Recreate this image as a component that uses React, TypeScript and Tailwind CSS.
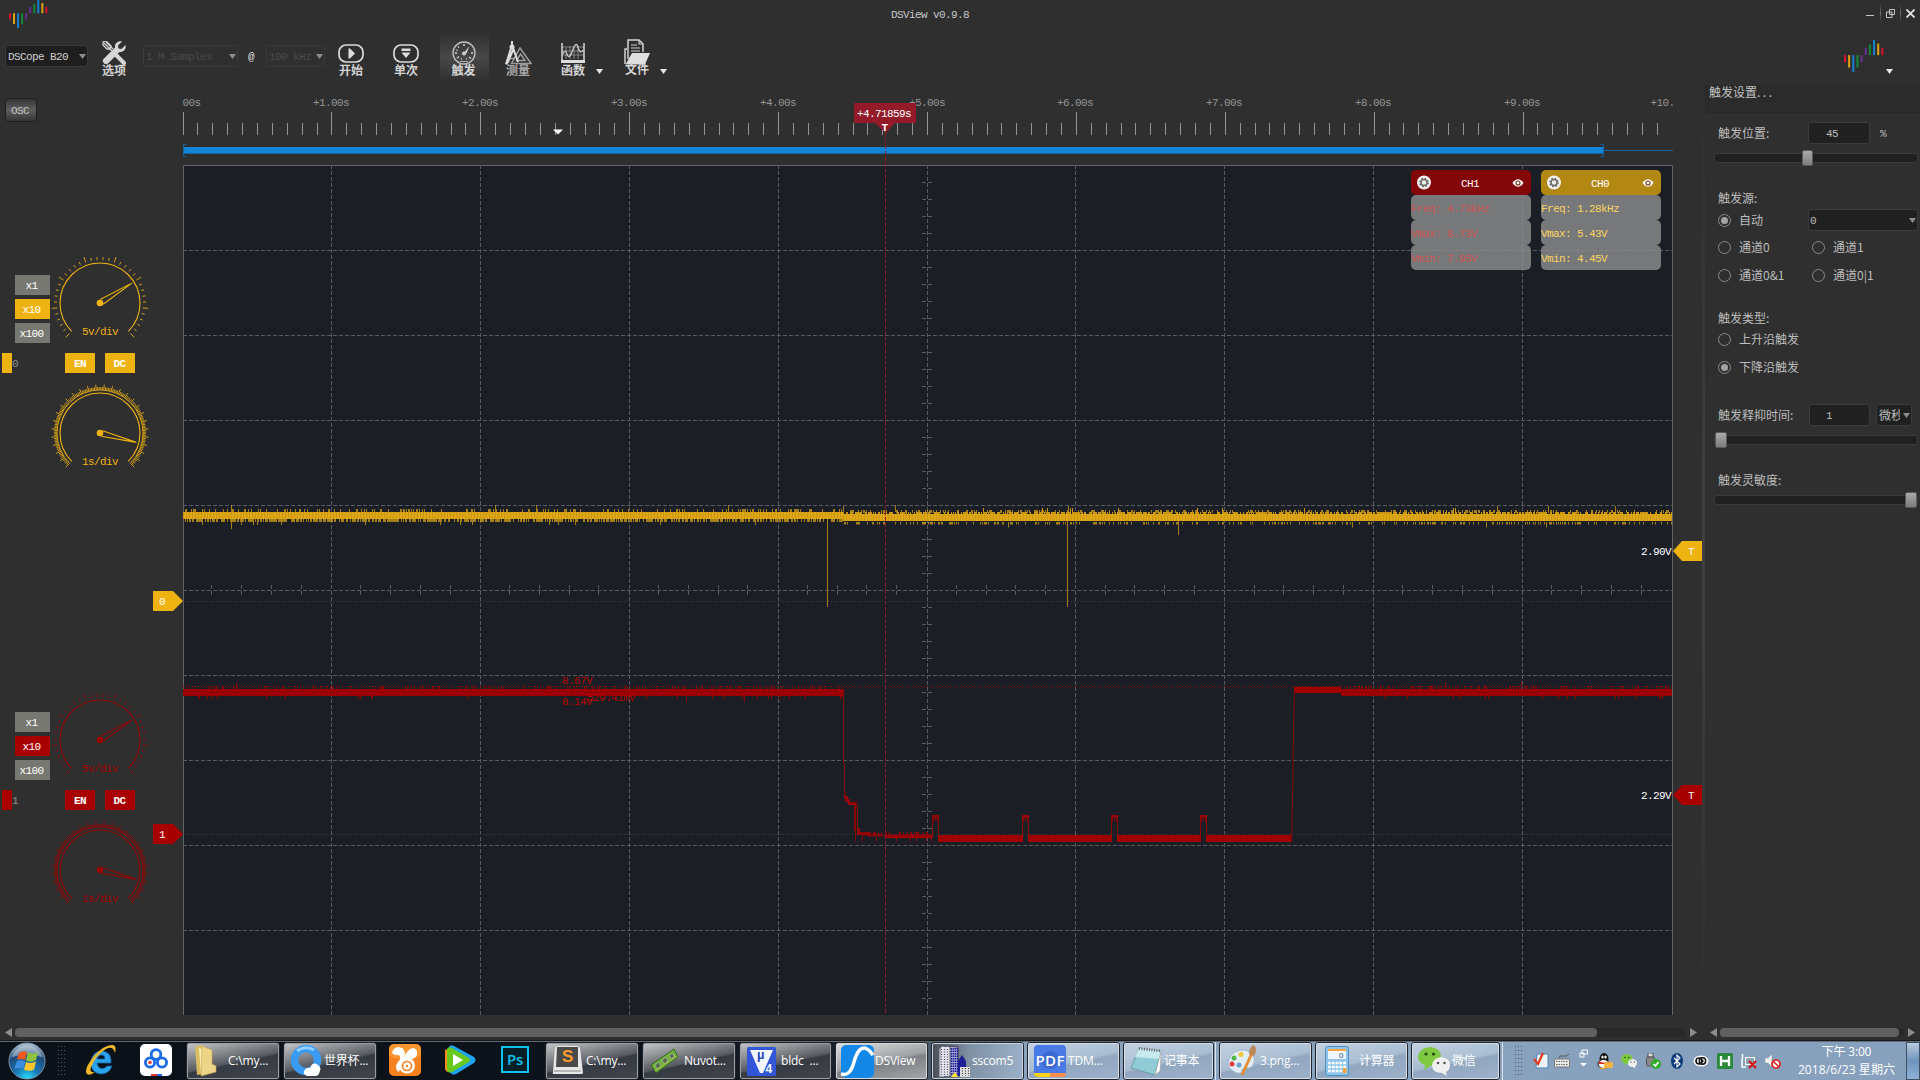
import React from "react";

const MONO = "font-['Liberation_Mono','Noto_Sans_CJK_SC',monospace] text-[11px] leading-[12px] tracking-[-0.6px] whitespace-pre pt-[2px]";
const CJK = "font-['Noto_Sans_CJK_SC',sans-serif] text-[12px] leading-[12px] whitespace-nowrap";

const YELLOW = "#efb311";
const RED = "#a80000";

function rng(seed: number) {
  let s = seed;
  return () => {
    s = (s * 1664525 + 1013904223) % 4294967296;
    return s / 4294967296;
  };
}

/* ---------- logo ---------- */
const LOGO_BARS: [number, number, string][] = [
  [17, 25, "#d8102c"], [17, 31, "#e0a412"], [17, 36, "#1581cf"], [17, 31, "#138a36"], [17, 25, "#693093"],
  [9, 17, "#693093"], [5, 17, "#138a36"], [0, 17, "#1581cf"], [4, 17, "#e0a412"], [9, 17, "#d8102c"],
];
function Logo({ w, h }: { w: number; h: number }) {
  return (
    <svg width={w} height={h} viewBox="0 0 40 36" preserveAspectRatio="none">
      {LOGO_BARS.map(([a, b, c], i) => (
        <rect key={i} x={i * 4.15} y={a} width="2" height={b - a} fill={c} />
      ))}
    </svg>
  );
}

/* ---------- toolbar ---------- */
function Down({ color = "#8d8d8d", w = 7 }: { color?: string; w?: number }) {
  return (
    <svg width={w} height="5" viewBox="0 0 8 5" preserveAspectRatio="none" className="shrink-0">
      <path d="M0 0H8L4 5Z" fill={color} />
    </svg>
  );
}

function ToolButton({ icon, label, dim }: { icon: React.ReactNode; label: string; dim?: boolean }) {
  return (
    <div className="flex w-[30px] shrink-0 flex-col items-center">
      <div className="flex h-[26px] items-center justify-center">{icon}</div>
      <div className={`${CJK} -mt-[2px] text-[11px] font-bold leading-[11px] ${dim ? "text-[#a8a8a8]" : "text-[#d4d4d4]"}`}>{label}</div>
    </div>
  );
}

const icoTools = (
  <svg width="24" height="24" viewBox="0 0 24 24">
    <path d="M1 1L4 0L9 5L8 8L5 8L1 4Z" fill="none" stroke="#d6d6d6" strokeWidth="1.3" />
    <path d="M2 2L10 10M4 1L11 8" stroke="#d6d6d6" strokeWidth="1.2" />
    <path d="M13 13L22 22" stroke="#d6d6d6" strokeWidth="4" strokeLinecap="round" />
    <path d="M20 .5L16 4.5L16.5 7.5L19.5 8L23.5 4C24.5 8 21.500 11.500 17.500 11L6 22.500C3.500 25 -1 20.500 1.500 18L13 6.500C12.500 2.500 16 -.5 20 .5Z" fill="#d6d6d6" />
  </svg>
);
const icoPlay = (
  <svg width="26" height="19" viewBox="0 0 26 19">
    <rect x="1" y="1" width="24" height="17" rx="7" fill="none" stroke="#dcdcdc" strokeWidth="1.7" />
    <path d="M10.500 4.500L12 4.500L17 9.500L12 14.500H10.500Z" fill="#dcdcdc" />
  </svg>
);
const icoSingle = (
  <svg width="26" height="19" viewBox="0 0 26 19">
    <rect x="1" y="1" width="24" height="17" rx="7" fill="none" stroke="#dcdcdc" strokeWidth="1.700" />
    <path d="M8.500 4.500H17.500V7H8.500ZM8.500 8.500H17.500L13 14Z" fill="#dcdcdc" />
  </svg>
);
const icoTrigger = (
  <svg width="24" height="24" viewBox="0 0 24 24">
    <circle cx="12" cy="12" r="11" fill="none" stroke="#c2c2c2" strokeWidth="1.3" />
    <path d="M12 12L17.500 5L14 13Z" fill="#e6e6e6" />
    <circle cx="12" cy="12.500" r="2" fill="#d0d0d0" />
    <path d="M6 5.500L7 6.500M12 3V5M3 12H5M19 12H21M5 17L7 15.500M17 16L19 17.500M9 18H10M14 18H15M4.500 9L5.500 9.500" stroke="#d0d0d0" strokeWidth="1.500" />
    <path d="M8 20.500H16" stroke="#b0b0b0" />
  </svg>
);
const icoMeasure = (
  <svg width="27" height="24" viewBox="0 0 27 24">
    <path d="M15 7L26 22.500H6.500Z M15.500 13L20 19.500H11.500Z" fill="none" stroke="#9b9b9b" strokeWidth="1.500" />
    <path d="M7 0V4M7 4L2 20L1 23L3 21L8 9M7 4L12 18L13 21" fill="none" stroke="#dedede" strokeWidth="2" />
    <circle cx="7" cy="6" r="2.500" fill="#dedede" />
    <path d="M2.500 17Q7 19 12 16" fill="none" stroke="#c8c8c8" />
  </svg>
);
const icoFunc = (
  <svg width="24" height="20" viewBox="0 0 24 20">
    <path d="M5 5V16M9 3V16M13 5V16M17 3V16M1 8H23M1 12H23M1 4H23" stroke="#8d8d8d" strokeWidth=".9" />
    <path d="M1 0V18.500H23V0" fill="none" stroke="#d8d8d8" strokeWidth="1.500" />
    <path d="M0 18.500H24" stroke="#dedede" strokeWidth="3" />
    <path d="M2 11Q4 5 6 11Q8 17 11 9Q15 -3 17 4Q19 12 22 7" fill="none" stroke="#cfcfcf" strokeWidth="1.200" />
  </svg>
);
const icoFile = (
  <svg width="27" height="26" viewBox="0 0 27 26">
    <path d="M4 20V1H15L19 5V13" fill="none" stroke="#d4d4d4" strokeWidth="1.500" />
    <path d="M15 1V5H19M7 6H13M7 9H16M7 12H16" stroke="#cfcfcf" strokeWidth="1.200" fill="none" />
    <path d="M1 25V10H3" fill="none" stroke="#d4d4d4" strokeWidth="1.500" />
    <path d="M8 14H26L21 25.500H1.500Z" fill="#e0e0e0" />
  </svg>
);

function Toolbar() {
  return (
    <div className="flex h-[57px] w-full items-start">
      <div className="ml-[5px] mt-[17px] flex h-[22px] w-[83px] items-center justify-between rounded-[3px] border border-[#3a3a3a] bg-[#1e1e1e] pl-[2px] pr-[1px]">
        <span className={`${MONO} text-[#d0d0d0]`}>DSCope B20</span>
        <Down />
      </div>
      <div className="ml-[11px] mt-[12px]"><ToolButton icon={icoTools} label="选项" /></div>
      <div className="ml-[14px] mt-[17px] flex h-[22px] w-[95px] items-center justify-between rounded-[3px] border border-[#3a3a3a] pl-[2px] pr-[1px]">
        <span className={`${MONO} text-[#4a4a4a]`}>1 M Samples</span>
        <Down />
      </div>
      <span className={`${MONO} ml-[10px] mt-[21px] w-[7px] text-[#dcdcdc]`}>@</span>
      <div className="ml-[11px] mt-[17px] flex h-[22px] w-[59px] items-center justify-between rounded-[3px] border border-[#3a3a3a] pl-[2px] pr-[1px]">
        <span className={`${MONO} text-[#4a4a4a]`}>100 kHz</span>
        <Down />
      </div>
      <div className="ml-[11px] mt-[12px]"><ToolButton icon={icoPlay} label="开始" /></div>
      <div className="ml-[25px] mt-[12px]"><ToolButton icon={icoSingle} label="单次" /></div>
      <div className="ml-[19px] mt-[4px] flex h-[50px] w-[49px] justify-center bg-[linear-gradient(#2f2f2f,#484848_50%,#2f2f2f)] pr-[2px] pt-[8px]">
        <ToolButton icon={icoTrigger} label="触发" />
      </div>
      <div className="ml-[14px] mt-[12px]"><ToolButton icon={icoMeasure} label="测量" dim /></div>
      <div className="ml-[25px] mt-[12px]"><ToolButton icon={icoFunc} label="函数" /></div>
      <div className="ml-[8px] mt-[41px]"><Down color="#e8e8e8" /></div>
      <div className="ml-[19px] mt-[11px]"><ToolButton icon={icoFile} label="文件" /></div>
      <div className="ml-[8px] mt-[41px]"><Down color="#e8e8e8" /></div>
      <div className="ml-auto mt-[12px]"><Logo w={40} h={32} /></div>
      <div className="ml-[2px] mr-[27px] mt-[41px]"><Down color="#e8e8e8" /></div>
    </div>
  );
}

/* ---------- channel controls ---------- */
function ticks(n: number, sub: number, minor: number, major: number) {
  let d = "";
  const total = n * sub;
  for (let i = 0; i <= total; i++) {
    const a = ((225 - (270 * i) / total) * Math.PI) / 180;
    const r2 = i % sub === 0 ? major : minor;
    d += `M${(43 * Math.cos(a)).toFixed(2)} ${(-43 * Math.sin(a)).toFixed(2)}L${(r2 * Math.cos(a)).toFixed(2)} ${(-r2 * Math.sin(a)).toFixed(2)}`;
  }
  return d;
}
const COARSE = ticks(7, 5, 46, 48.500);
const FINE = ticks(27, 5, 46, 48.500);

function Dial({ color, label, angle, fine, top, h, dim }: { color: string; label: string; angle: number; fine?: boolean; top: number; h: number; dim?: boolean }) {
  return (
    <svg width="100" height={h} viewBox={`-50 ${-top} 100 ${h}`} className="ml-[50px] block shrink-0">
      <g stroke={color} fill="none" opacity={dim ? 0.85 : 1}>
        <path d="M-28.300 28.300A40 40 0 1 1 28.300 28.300" strokeWidth="1.100" />
        {fine && <path d="M-30.400 30.400A43 43 0 1 1 30.400 30.400" strokeWidth="1" opacity=".8" />}
        <path d={fine ? FINE : COARSE} strokeWidth="1" opacity=".85" />
        <g transform={`rotate(${angle})`}>
          <path d="M2 -2.800L37.500 0L2 2.800" strokeWidth="1.100" />
        </g>
        <circle r="3.300" fill={color} stroke="none" />
      </g>
      <text x="-18" y="32" fill={color} className={MONO}>{label}</text>
    </svg>
  );
}

function Channel({ color, idx }: { color: string; idx: string }) {
  const dim = color === RED;
  const bg = dim ? "bg-[#a80000]" : "bg-[#efb311]";
  return (
    <div className="flex w-[150px] flex-col">
      <div className="flex h-[105px]">
        <div className="-mr-[50px] ml-[15px] flex w-[35px] shrink-0 flex-col gap-[4px] pt-[27px]">
          {["x1", "x10", "x100"].map((t) => (
            <div key={t} className={`${MONO} flex h-[20px] items-center justify-center pr-[2px] text-white ${t === "x10" ? bg : "bg-[#777872]"}`}>{t}</div>
          ))}
        </div>
        <Dial color={color} label="5v/div" angle={-32} top={55} h={105} dim={dim} />
      </div>
      <div className="flex h-[20px] items-center">
        <div className={`ml-[2px] h-[20px] w-[10px] ${bg}`} />
        <span className={`${MONO} w-[53px] text-[#8f8f8f]`}>{idx}</span>
        <div className={`${MONO} flex h-[20px] w-[30px] items-center justify-center font-bold text-white ${bg}`}>EN</div>
        <div className={`${MONO} ml-[10px] flex h-[20px] w-[30px] items-center justify-center pr-px font-bold text-white ${bg}`}>DC</div>
      </div>
      <Dial color={color} label="1s/div" angle={14.500} fine top={60} h={112} dim={dim} />
    </div>
  );
}

/* ---------- wave forms ---------- */
const gridX = (k: number) => Math.round(183 + 148.900 * k) + 0.5 - (k > 0 && k < 10 ? 1 : 0);

function noise(seed: number, x0: number, x1: number, y: number, h: number, pUp: number, pDown: number, up: number, down: number) {
  const r = rng(seed);
  let d = "";
  for (let x = x0; x < x1; x++) {
    if (r() < pUp) d += `M${x + 0.5} ${y}v${-up - (r() < 0.02 ? 4 : 0)}`;
    if (r() < pDown) d += `M${x + 0.5} ${y + h}v${down + (r() < 0.03 ? 3 : 0)}`;
  }
  return d;
}
const Y_NOISE = noise(7, 183, 843, 512, 7, 0.23, 0.6, 3, 3) + noise(19, 843, 1672, 513, 9, 0.3, 0.3, 3, 2.500);
const Y_BAND2 = noise(3, 843, 1672, 514, 1, 0.6, 0, 2, 0);
const R_NOISE = noise(11, 183, 843, 689, 7, 0.2, 0.05, 3, 3) + noise(23, 1341, 1672, 689, 7, 0.18, 0.04, 3, 3);
const R_LOW = noise(31, 862, 932, 836, 1, 0.3, 0.12, 4, 4);
const stripes = (x0: number, x1: number, y: number, h: number) => {
  let d = "";
  for (let x = x0; x < x1; x += 3) d += `M${x + 0.5} ${y}v${h}`;
  return d;
};
const PULSES = [932, 1022, 1111, 1200];
const lowBands: [number, number][] = [[939, 1023], [1028, 1112], [1117, 1201], [1206, 1291]];

function Plot() {
  const ruler: React.ReactNode[] = [];
  for (let i = 0; i <= 99; i++) {
    const x = Math.floor(183 + 14.890 * i) + 0.5;
    ruler.push(<path key={i} d={`M${x} ${i % 10 === 0 ? 112 : 123}V135`} stroke="#949494" />);
  }
  return (
    <svg width="1552" height="937" viewBox="150 85 1552 937" className="block">
      <g fill="#949494" className={MONO}>
        <text x="182.500" y="106">00s</text>
        {[1, 2, 3, 4, 5, 6, 7, 8, 9].map((n) => (
          <text key={n} x={gridX(n) - 18.500} y="106">{`+${n}.00s`}</text>
        ))}
        <text x="1650.500" y="106">+10.</text>
      </g>
      {ruler}
      <path d="M553 129.500H563L558 134.500Z" fill="#fff" />
      {/* acquisition progress */}
      <rect x="183" y="150" width="1490" height="1" fill="#17639b" />
      <rect x="183" y="147" width="1420" height="6" fill="#1385d7" />
      <rect x="183" y="153" width="1420" height="1" fill="#17639b" />
      <path d="M186.500 144.500H183.500V156.500H186.500M1600.500 144.500H1603.500V156.500H1600.500" fill="none" stroke="#17639b" />

      <rect x="183" y="165" width="1490" height="850" fill="#1b1e25" />
      <path d="M183.500 1015V165.500H1672.500V1015" fill="none" stroke="#626365" />
      {/* grid */}
      <g stroke="#595b60" fill="none" strokeDasharray="4 2">
        {[250, 335, 420, 505, 590, 675, 760, 845, 930].map((y) => (
          <path key={y} d={`M183 ${y + 0.5}H1672`} />
        ))}
        {[1, 2, 3, 4, 5, 6, 7, 8, 9].map((k) => (
          <path key={k} d={`M${gridX(k)} 165V1015`} />
        ))}
      </g>
      <g stroke="#595b60">
        {Array.from({ length: 50 }, (_, i) => i).filter((i) => i % 5 !== 0).map((i) => {
          const x = Math.floor(183 + 29.780 * i) - 0.5;
          return <path key={i} d={`M${x} 585v4M${x} 591v4`} />;
        })}
        {Array.from({ length: 50 }, (_, i) => i).filter((i) => i % 5 !== 0).map((i) => (
          <path key={i} d={`M922 ${165.500 + 17 * i}h4M928 ${165.500 + 17 * i}h4`} />
        ))}
      </g>
      <path d="M183 601.500H1672M183 834.500H1672" stroke="#3d4045" strokeDasharray="1 2" />

      {/* channel 0 */}
      <path d={Y_NOISE} stroke={YELLOW} opacity=".65" />
      <rect x="183" y="512" width="660" height="7" fill="#dfa714" />
      <rect x="843" y="514" width="829" height="7" fill="#dfa714" />
      <path d={Y_BAND2} stroke="#c99713" />
      <path d={stripes(183, 843, 512, 7) + stripes(843, 1672, 515, 6)} stroke="#cb9815" />
      <path d="M827.500 519V607M1067.500 521V607M1178.500 521V535M231.500 519V529M895.500 512V505" stroke="#a88018" />

      {/* channel 1 */}
      <path d="M183 686.500H1672" stroke={RED} strokeDasharray="1 2" />
      <path d={R_NOISE} stroke={RED} opacity=".75" />
      <rect x="183" y="689" width="661" height="7" fill="#a00003" />
      <rect x="1341" y="689" width="331" height="7" fill="#a00003" />
      <path d="M1294 687H1341V693H1294Z" fill="#a00003" />
      <path d={stripes(183, 843, 689, 7) + stripes(1341, 1672, 689, 7)} stroke="#900205" />
      <path d="M843.500 690V763M844.500 762V797" stroke="#7f070b" />
      <path d="M844 793H845.500V796H848V799H850V802H856.500V807H854V805H848V802H845V798H844Z" fill="#97040a" />
      <path d="M854.500 802V831M855.500 802V841M857.500 805V830M855 802H857.500M1294.500 689L1293.500 733L1292.500 800L1291.500 842" stroke="#8a0408" fill="none" />
      <path d="M857 828H860V832H871V835H857Z" fill="#97040a" />
      <path d="M868 835.500H932" stroke="#a00003" strokeWidth="2" strokeDasharray="5 1 3 0.500" />
      <path d="M885 836.500H932" stroke="#a00003" strokeWidth="3" />
      <path d={R_LOW} stroke="#8a0408" />
      {PULSES.map((x) => (
        <g key={x}>
          <path d={`M${x + 0.500} 838V815.500H${x + 6.500}V842`} fill="none" stroke="#8a0408" />
          <rect x={x} y="815" width="7" height="3" fill="#97040a" />
          <path d={`M${x + 1.500} 817v5M${x + 5.500} 817v5M${x + 3.500} 817v4`} stroke="#7f070b" />
        </g>
      ))}
      {lowBands.map(([a, b]) => (
        <rect key={a} x={a} y="835" width={b - a} height="7" fill="#a00003" />
      ))}

      <g fill="#b80000" className={MONO}>
        <text x="562" y="684">8.67V</text>
        <text x="562" y="705">8.14V</text>
        <text x="587" y="700.500">529.41mV</text>
      </g>

      {/* trigger time cursor */}
      <path d="M885.500 133V1015" stroke="#8f1b2a" strokeDasharray="4 2" />
      <path d="M854 103H916V123H895L885.500 133L875 123H854Z" fill="#931a28" />
      <g fill="#fff" className={MONO}>
        <text x="857" y="117">+4.71859s</text>
        <text x="881.500" y="131" className="font-bold">T</text>
      </g>

      {/* level markers */}
      <path d="M153 591H173L183 601L173 611H153Z" fill={YELLOW} />
      <path d="M153 824H173L183 834L173 844H153Z" fill={RED} />
      <path d="M1702 541H1682L1673 551L1682 561H1702Z" fill={YELLOW} />
      <path d="M1702 785H1682L1673 795L1682 805H1702Z" fill={RED} />
      <g fill="#fff" className={MONO}>
        <text x="159" y="605">0</text>
        <text x="159" y="838">1</text>
        <text x="1688" y="555">T</text>
        <text x="1688" y="799">T</text>
        <text x="1641" y="555">2.90V</text>
        <text x="1641" y="799">2.29V</text>
      </g>
    </svg>
  );
}

function MeasureCard({ name, head, text, rows }: { name: string; head: string; text: string; rows: string[] }) {
  return (
    <div className="flex w-[120px] flex-col">
      <div className={`flex h-[25px] items-center rounded-[5px] ${head}`}>
        <svg width="16" height="16" viewBox="0 0 16 16" className="ml-[5px]">
          <circle cx="8" cy="7.500" r="7" fill="#f1f1f1" />
          <circle cx="8" cy="7.500" r="3" fill="none" stroke="#6d6860" strokeWidth="1.500" />
          <circle cx="8" cy="7.500" r="4.200" fill="none" stroke="#6d6860" strokeWidth="1.300" strokeDasharray="1.700 1.600" />
        </svg>
        <span className={`${MONO} flex-1 pr-[4px] text-center text-white`}>{name}</span>
        <svg width="12" height="8" viewBox="0 0 12 8" className="mr-[7px] mt-[1px]">
          <path d="M0.500 4Q6 -3.500 11.500 4Q6 11.500 .5 4Z" fill="#fff" />
          <circle cx="6" cy="4" r="2" fill="none" stroke="#7a2a12" strokeWidth="1.100" />
        </svg>
      </div>
      {rows.map((r) => (
        <div key={r} className={`${MONO} ${text} flex h-[25px] items-center rounded-[5px] bg-[#8d8e90cc]`}>{r}</div>
      ))}
    </div>
  );
}

/* ---------- trigger dock ---------- */
function Slider({ pos, w = 11 }: { pos: number; w?: number }) {
  return (
    <div className="relative ml-[9px] h-[16px] w-[204px] shrink-0 py-[3px]">
      <div className="h-[10px] rounded-[3px] border border-[#3a3a3a] bg-[#202020]" />
      <div className="absolute top-0 h-[16px] rounded-[2px] border border-[#5a5a5a] bg-[linear-gradient(#a9a9a9,#7c7c7c)]" style={{ left: pos, width: w }} />
    </div>
  );
}
function Radio({ label, on }: { label: string; on?: boolean }) {
  return (
    <div className="flex h-[22px] items-center">
      <div className="flex h-[13px] w-[13px] shrink-0 items-center justify-center rounded-full border border-[#8a8a8a]">
        {on && <div className="h-[7px] w-[7px] rounded-full bg-[#a3a3a3]" />}
      </div>
      <span className={`${CJK} ml-[8px] text-[#bdbdbd]`}>{label}</span>
    </div>
  );
}
function Dock() {
  const lab = `${CJK} ml-[13px] text-[#bdbdbd]`;
  const box = "flex h-[22px] items-center rounded-[3px] border border-[#3a3a3a] bg-[#202020]";
  return (
    <div className="flex w-[215px] flex-col">
      <div className={`${CJK} h-[28px] shrink-0 border border-[#292929] bg-[#2b2b2b] pl-[3px] text-[#c4c4c4]`}>触发设置<span className="tracking-[2.5px]">...</span></div>
      <div className="mt-[9px] flex h-[22px] items-center">
        <span className={`${lab} w-[90px]`}>触发位置:</span>
        <div className={`${box} w-[62px] pl-[17px]`}><span className={`${MONO} text-[#bdbdbd]`}>45</span></div>
        <span className={`${MONO} ml-[10px] text-[#bdbdbd]`}>%</span>
      </div>
      <div className="h-[6px]" />
      <Slider pos={88} />
      <div className="mt-[26px]"><div className={lab}>触发源:</div></div>
      <div className="mt-[5px] flex">
        <div className="ml-[13px] w-[90px]"><Radio label="自动" on /></div>
        <div className={`${box} w-[110px] justify-between pl-[1px] pr-[1px]`}><span className={`${MONO} text-[#bdbdbd]`}>0</span><Down /></div>
      </div>
      <div className="ml-[13px] mt-[5px] grid grid-cols-[94px_1fr] gap-y-[6px]">
        <Radio label="通道0" /><Radio label="通道1" />
        <Radio label="通道0&1" /><Radio label="通道0|1" />
      </div>
      <div className="mt-[26px]"><div className={lab}>触发类型:</div></div>
      <div className="ml-[13px] mt-[4px] flex flex-col gap-[6px]"><Radio label="上升沿触发" /><Radio label="下降沿触发" on /></div>
      <div className="mt-[26px] flex h-[22px] items-center">
        <span className={`${lab} w-[91px]`}>触发释抑时间:</span>
        <div className={`${box} w-[61px] pl-[16px]`}><span className={`${MONO} text-[#bdbdbd]`}>1</span></div>
        <div className={`${box} ml-[6px] w-[36px] justify-between overflow-hidden pl-[2px] pr-[1px]`}>
          <span className={`${CJK} w-[21px] overflow-hidden text-[#bdbdbd]`}>微秒</span><Down />
        </div>
      </div>
      <div className="h-[6px]" />
      <Slider pos={1} w={12} />
      <div className="mt-[26px]"><div className={lab}>触发灵敏度:</div></div>
      <div className="h-[6px]" />
      <Slider pos={191} w={12} />
    </div>
  );
}

/* ---------- scroll bars ---------- */
function Arrow({ left }: { left?: boolean }) {
  return (
    <svg width="7" height="9" viewBox="0 0 7 9" className="shrink-0">
      <path d={left ? "M7 0V9L0 4.500Z" : "M0 0V9L7 4.500Z"} fill="#8d8d8d" />
    </svg>
  );
}
function ScrollBars() {
  return (
    <div className="flex h-[19px] items-center border-b border-[#191919] pt-[3px]">
      <div className="ml-[5px] flex w-[1692px] items-center">
        <Arrow left />
        <div className="ml-[3px] h-[9px] w-[1671px] rounded-[4px] bg-[#292929]"><div className="h-[9px] w-[1582px] rounded-[4px] bg-[#606060]" /></div>
        <div className="ml-auto"><Arrow /></div>
      </div>
      <div className="ml-[13px] flex w-[205px] items-center">
        <Arrow left />
        <div className="ml-[3px] h-[9px] w-[184px] rounded-[4px] bg-[#292929]"><div className="h-[9px] w-[179px] rounded-[4px] bg-[#606060]" /></div>
        <div className="ml-auto"><Arrow /></div>
      </div>
    </div>
  );
}

/* ---------- task bar ---------- */
const UI = "font-['Open_Sans','Noto_Sans_CJK_SC',sans-serif] text-[12px] leading-[16px] tracking-[-0.2px] whitespace-pre";

function Task({ w, icon, label, kind, pl = 7 }: { w: number; icon: React.ReactNode; label: string; kind: "dark" | "active" | "mixed" | "light"; pl?: number }) {
  const bg = {
    dark: "bg-[linear-gradient(168deg,#c2c3c5_0%,#85888c_30%,#575b61_52%,#363b43_56%,#40454d_100%)] border-[#9a9da2]",
    active: "bg-[linear-gradient(168deg,#dcdcdc_0%,#a0a2a6_50%,#7d8085_56%,#a2a6ab_100%)] border-[#d8d8d8]",
    mixed: "bg-[linear-gradient(90deg,#4a4f57_0%,#7f90a4_40%,#9bb0c8_100%)] border-[#c8d4e0]",
    light: "bg-[linear-gradient(168deg,#c2d1e0_0%,#a9bdd2_50%,#91a7c0_56%,#9db2c9_100%)] border-[#d3deea]",
  }[kind];
  return (
    <div className="shrink-0 rounded-[3px] border border-[#20242b]" style={{ width: w }}>
      <div className={`flex h-[36px] items-center overflow-hidden rounded-[2px] border ${bg}`} style={{ paddingLeft: pl - 2 }}>
        <div className="flex w-[34px] shrink-0 items-center">{icon}</div>
        <span className={`${UI} mb-px text-white`}>{label}</span>
      </div>
    </div>
  );
}

const S = ({ w = 32, h = 32, vb = "0 0 32 32", children }: { w?: number; h?: number; vb?: string; children: React.ReactNode }) => (
  <svg width={w} height={h} viewBox={vb} className="shrink-0">{children}</svg>
);

const tOrb = (
  <S w={38} h={38} vb="0 0 38 38">
    <defs>
      <radialGradient id="orb" cx=".5" cy="1" r="1"><stop offset="0" stopColor="#27e3ff" /><stop offset=".35" stopColor="#1a78b4" /><stop offset=".7" stopColor="#1c4a78" /><stop offset="1" stopColor="#b9c9d6" /></radialGradient>
    </defs>
    <circle cx="19" cy="19" r="18" fill="url(#orb)" stroke="#7d94a8" strokeWidth="1" />
    <path d="M4 15A15.500 15.500 0 0 1 34 15Q19 10 4 15Z" fill="#fff" opacity=".35" />
    <path d="M11 11Q15 8 19 10L17 18Q13 16 9 18Z" fill="#ee5a1f" />
    <path d="M20 10.500Q25 13 30 10L28 18Q23 21 18 18.500Z" fill="#8ec43b" />
    <path d="M8.500 19.500Q13 17 17 19.500L15 27Q11 25 6.500 27Z" fill="#3d8ee0" />
    <path d="M18 20Q23 22 28 19.500L26 27.500Q21 30 16 27.500Z" fill="#fcc62c" />
  </S>
);
const tIE = (
  <S w={34} h={32} vb="0 0 34 32">
    <path d="M27 19H13Q14 25 19 24.500Q22 24 23 22H28Q25 30 17 30Q7 29 7 19Q8 7 18 7Q28 8 27 19ZM13 15H21Q21 11 17.500 11Q14 11 13 15Z" fill="#2aa3ea" stroke="#1465ae" strokeWidth=".8" />
    <path d="M31 9Q33 1 28 1Q20 1 10 12Q-1 26 3 30Q6 32 11 28Q5 29 7 23Q12 11 22 5Q29 1 31 9Z" fill="#f1b728" />
  </S>
);
const tBaidu = (
  <S><rect width="32" height="32" rx="5" fill="#fff" />
    <g fill="none" stroke="#1c6ce8" strokeWidth="2.800"><circle cx="16" cy="10.500" r="4.800" /><circle cx="10" cy="18.500" r="4.600" /><circle cx="22" cy="18.500" r="4.600" /></g>
    <circle cx="10" cy="18.500" r="1.800" fill="#ec3b3b" />
    <rect x="11" y="30" width="6" height="2" fill="#e33" /><rect x="17" y="30" width="5" height="2" fill="#26e" />
  </S>
);
const tFolder = (
  <S><path d="M1 2L8 0V29L3 30Z" fill="#d9bd62" /><path d="M5 3L15 6L16 27L7 30Z" fill="#fbeeb4" /><path d="M8 1L18 5V19L22 21V27L7 31Z" fill="#ecd588" stroke="#c6a64c" strokeWidth=".6" /></S>
);
const tQB = (
  <S><circle cx="16" cy="15" r="11.500" fill="none" stroke="#3a9bf4" strokeWidth="7.500" /><path d="M7 6Q15 0 24 5" stroke="#8fd0ff" strokeWidth="3" fill="none" /><path d="M17 31Q12 29 15 24.500Q17 22 20 23Q23 16 28 20Q32 23 29.500 27Q29 31 25 31Z" fill="#fff" /></S>
);
const tUC = (
  <S><rect width="32" height="32" rx="5" fill="#f6821f" /><rect width="32" height="14" rx="5" fill="#fba33a" opacity=".6" />
    <path d="M9 28Q5 22 9 18Q13 14 10 11Q6 12 3 9Q4 4 9 3Q15 3 16 9Q16 12 15 14Q18 5 24 4Q29 5 28 11Q26 15 22 15" fill="#fff" />
    <circle cx="18" cy="21.500" r="8" fill="#fff" /><circle cx="18" cy="22" r="4.500" fill="none" stroke="#f6821f" strokeWidth="1.700" /><circle cx="18" cy="22" r="1.200" fill="#f6821f" />
  </S>
);
const tVideo = (
  <S><path d="M1 6L4 5V28Q1 27 1 24Z" fill="#fc8a1c" /><path d="M5 3Q6 0 10 2L30 13Q33 16 30 19L12 30Q7 32 6 27Z" fill="#1fa2f2" /><path d="M3 5Q4 2 8 4L25 14Q27 16 25 18L8 28Q4 30 3 26Z" fill="#68c91c" /><path d="M9 10L19 16L9 22Z" fill="#fff" /></S>
);
const tPs = (
  <div className="flex h-[27px] w-[28px] items-center justify-center border-2 border-[#0cc3f0] bg-[#061e26] font-['Open_Sans',sans-serif] text-[15px] font-semibold tracking-tight text-[#0cc3f0]">Ps</div>
);
const tSublime = (
  <S><path d="M3 3L5 1H26L28 3L31 28Q31 29 29 29H2Q0 29 1 27Z" fill="#e8e8e8" /><path d="M5 2H26V22H4Z" fill="#4a4a4a" /><path d="M2 26H29" stroke="#888" />
    <text x="10" y="17" fontSize="17" fontWeight="700" fill="#ff9a2e" fontFamily="Liberation Sans">S</text></S>
);
const tRam = (
  <S><path d="M1 20L24 4L28 12L6 28Z" fill="#6fb13c" stroke="#35651a" /><path d="M5 20L9 17L11 21L7 24ZM12 15L16 12L18 16L14 19ZM19 10L23 8L24 12L21 14Z" fill="#5b6a52" stroke="#b9cfa0" strokeWidth=".6" /><path d="M5 26L27 11" stroke="#d7c64b" strokeDasharray="1 1" /></S>
);
const tKeil = (
  <S w={29} h={29} vb="0 0 29 29"><rect width="29" height="29" rx="1.500" fill="#3157d8" /><path d="M3 3H26L16 26H13Z" fill="#f3f5ff" />
    <text x="10" y="12" fontSize="13" fontWeight="700" fill="#2a49b8" fontFamily="Liberation Sans">µ</text>
    <text x="18.500" y="26" fontSize="12" fontWeight="700" fill="#fff" fontFamily="Liberation Sans">4</text></S>
);
const tDS = (
  <S w={33} h={33} vb="0 0 33 33"><rect width="33" height="33" rx="5" fill="#1488e8" /><path d="M0 29Q9 32 13 17Q17 2 24 3Q29 5 32 10" fill="none" stroke="#fff" strokeWidth="3.500" /></S>
);
const tCity = (
  <S w={33} h={33} vb="0 0 33 33"><path d="M1 4L6 1V32H1Z" fill="#9fa0ac" /><path d="M3 2H12V31H2Z" fill="#e4e4ea" /><path d="M12 1L20 2V31H12Z" fill="#a9a9d6" stroke="#111" strokeWidth=".6" /><path d="M20 16L24 10L28 16V31H20Z" fill="#1d1d96" /><path d="M22 22H32V32H22Z" fill="#dcdcdc" />
    <path d="M3.500 4V30M6.500 4V30M9.500 4V30" stroke="#4d4e70" strokeWidth="1.200" strokeDasharray="1 1.500" />
    <path d="M13.500 3V30M15.500 3V30M17.500 3V30M19.500 3V30" stroke="#17179a" strokeWidth="1.400" strokeDasharray="1.500 1" />
    <path d="M24.500 23V31M27.500 23V31M30.500 23V31" stroke="#333" strokeDasharray="1 1.500" /><path d="M13 32L17 27L20 32Z" fill="#ffe32a" /></S>
);
const tPdf = (
  <S><rect width="32" height="32" rx="4" fill="#4a7ae6" /><path d="M0 28H16V32H4Q0 32 0 28Z" fill="#fdd118" /><path d="M16 28H32Q32 32 28 32H16Z" fill="#fa8e4b" /><circle cx="16" cy="15" r="9" fill="#3c69d2" />
    <text x="1.500" y="21" fontSize="15" fontWeight="600" fill="#fff" fontFamily="Open Sans" textLength="29">PDF</text></S>
);
const tNote = (
  <S><path d="M9 3L31 6L25 30L1 23Z" fill="#8ecbd4" stroke="#5b8e99" strokeWidth=".7" /><path d="M9 3L31 6L29 14L5 12Z" fill="#c7eaee" /><path d="M31 7L30 26L25 30Z" fill="#fff" stroke="#a99" strokeWidth=".5" /><path d="M9 3.500L31 6" stroke="#666" strokeWidth="3" strokeDasharray="1 1.500" /></S>
);
const tPaint = (
  <S><path d="M3 14Q7 4 19 5Q30 8 28 18Q26 24 20 23Q15 23 16 27Q13 30 7 26Q0 22 3 14Z" fill="#e2eef6" stroke="#9cb6c9" />
    <circle cx="6" cy="19" r="2.500" fill="#e23d3d" /><circle cx="8" cy="13" r="2.500" fill="#51b54b" /><circle cx="15" cy="9.500" r="2.500" fill="#f3c433" /><circle cx="13" cy="20" r="2.500" fill="#6ca4cf" />
    <path d="M26 8L16 30" stroke="#e48e33" strokeWidth="3" /><path d="M23 9Q23 2 28 0Q32 4 28 11Z" fill="#b98a57" /></S>
);
const tCalc = (
  <S w={24} h={30} vb="0 0 24 30"><rect x=".5" y=".5" width="23" height="29" rx="2" fill="#8ec4ea" stroke="#4b8fbf" /><rect x="3" y="3" width="18" height="10" fill="#eef6fc" /><rect x="3" y="3" width="18" height="2" fill="#f5a23a" />
    <text x="14" y="12" fontSize="8" fill="#2d4d66" fontFamily="Liberation Sans">0</text>
    <path d="M3 17H21M3 21H21M3 25H21" stroke="#fff" strokeWidth="2.700" strokeDasharray="2.800 1" /><rect x="18" y="22" width="3.500" height="5" fill="#f5a23a" /></S>
);
const wx = (
  <>
    <path d="M12 2Q23 3 23 12Q23 21 12 21L6 25L7 20Q0 17 0 12Q1 3 12 2Z" fill="#7ec940" />
    <path d="M23 12Q32 13 32 20Q32 25 28 27L29 31L24 28Q14 28 14 20Q15 13 23 12Z" fill="#f0f0f0" />
    <circle cx="8" cy="9" r="1.600" fill="#234a10" /><circle cx="15.500" cy="9" r="1.600" fill="#234a10" /><circle cx="20" cy="18" r="1.300" fill="#555" /><circle cx="26.500" cy="18" r="1.300" fill="#555" />
  </>
);
const tWx = <S>{wx}</S>;

function Grip() {
  return (
    <svg width="8" height="32" className="shrink-0">
      {[0, 1, 2, 3, 4, 5, 6, 7].map((r) => [0, 1, 2].map((c) => <rect key={`${r}${c}`} x={c * 3} y={r * 4 + 1} width="1" height="1" fill="#4c5a68" />))}
    </svg>
  );
}

const I16 = ({ children, ml }: { children: React.ReactNode; ml: string }) => (
  <svg width="16" height="16" viewBox="0 0 16 16" className={`shrink-0 ${ml}`}>{children}</svg>
);

function TaskBar() {
  return (
    <div className="flex h-[39px] items-center border-t border-[#5f6a76] bg-[linear-gradient(90deg,#0a1118_0px,#0d131b_640px,#1a2029_840px,#4c5b6c_930px,#8ba3be_1000px,#86a0bd_1920px)]">
      <div className="ml-[8px]">{tOrb}</div>
      <div className="ml-[12px]"><Grip /></div>
      <div className="mb-[2px] ml-[18px]">{tIE}</div>
      <div className="mb-[2px] ml-[22px]">{tBaidu}</div>
      <div className="ml-[14px] flex"><Task w={94} icon={tFolder} label="C:\my..." kind="dark" pl={8} /></div>
      <div className="ml-[3px] flex"><Task w={94} icon={tQB} label="世界杯..." kind="dark" /></div>
      <div className="mb-[2px] ml-[12px]">{tUC}</div>
      <div className="mb-[2px] ml-[23px]">{tVideo}</div>
      <div className="mb-[3px] ml-[25px]">{tPs}</div>
      <div className="ml-[16px] flex gap-[3px]">
        <Task w={94} icon={tSublime} label="C:\my..." kind="dark" />
        <Task w={94} icon={tRam} label="Nuvot..." kind="dark" pl={8} />
        <Task w={93} icon={tKeil} label="bldc  ..." kind="dark" pl={8} />
        <Task w={93} icon={tDS} label="DSView" kind="active" pl={6} />
        <Task w={93} icon={tCity} label="sscom5" kind="mixed" />
        <Task w={93} icon={tPdf} label="TDM..." kind="light" />
        <div className="flex border-r border-[#dbe5ef] pr-[1px]"><Task w={91} icon={tNote} label="记事本" kind="light" /></div>
        <Task w={93} icon={tPaint} label="3.png..." kind="light" />
        <Task w={93} icon={tCalc} label="计算器" kind="light" pl={10} />
        <div className="flex border-r border-[#dbe5ef] pr-[2px]"><Task w={89} icon={tWx} label="微信" kind="light" /></div>
      </div>
      <div className="ml-[12px]"><Grip /></div>
      <I16 ml="ml-[10px]"><path d="M4 1H15V15H3Z" fill="#eef3f8" stroke="#4a86b8" /><path d="M1 6L5 11L10 0" fill="none" stroke="#e5371c" strokeWidth="2.200" /></I16>
      <I16 ml="ml-[5px]"><rect x=".5" y="6" width="15" height="8" rx="1" fill="#e8e8e8" stroke="#777" /><path d="M2 8.500H14M2 11.500H14" stroke="#666" strokeDasharray="1.500 1" /><path d="M5 5Q5 2 9 3T15 1" fill="none" stroke="#555" /></I16>
      <svg width="9" height="18" viewBox="0 0 9 18" className="mb-[6px] ml-[9px] shrink-0"><path d="M3 1H8.500V5H3ZM1 4H5V8H1Z" fill="none" stroke="#fff" /><path d="M1 14H8L4.500 17.500Z" fill="#fff" /></svg>
      <I16 ml="ml-[9px]"><ellipse cx="7" cy="6" rx="4.500" ry="6" fill="#111" /><ellipse cx="6.500" cy="11" rx="5.500" ry="4.500" fill="#fff" stroke="#111" /><path d="M2 8Q7 11 12 8L12 11H2Z" fill="#e02a20" /><rect x="7" y="9" width="9" height="6" rx="2" fill="#f8b13a" /><ellipse cx="5.500" cy="4" rx="1.200" ry="1.500" fill="#fff" /><ellipse cx="8.500" cy="4" rx="1.200" ry="1.500" fill="#fff" /><path d="M3 15.500H9" stroke="#f39a1c" strokeWidth="1.500" /></I16>
      <svg width="16" height="16" viewBox="0 0 32 32" className="ml-[8px] shrink-0">{wx}</svg>
      <I16 ml="ml-[8px]"><rect x="3" y="0" width="5" height="4" fill="#ddd" stroke="#555" /><rect x="1.500" y="4" width="8" height="9" rx="1.500" fill="#888" stroke="#555" /><circle cx="11" cy="11" r="5" fill="#2fab2d" /><path d="M8.500 11L10.500 13L13.500 9" stroke="#fff" strokeWidth="1.600" fill="none" /></I16>
      <I16 ml="ml-[8px]"><ellipse cx="8" cy="8" rx="6" ry="8" fill="#0d3c7c" /><path d="M5 5L11 11L8 14V2L11 5L5 11" fill="none" stroke="#fff" strokeWidth="1.100" /></I16>
      <I16 ml="ml-[8px]"><ellipse cx="8" cy="8" rx="7.500" ry="5.500" fill="#fff" /><circle cx="6" cy="8" r="3" fill="none" stroke="#111" strokeWidth="1.700" /><circle cx="9.500" cy="8" r="3.200" fill="none" stroke="#111" strokeWidth="1.500" /><circle cx="9.500" cy="8" r="1.200" fill="#111" /></I16>
      <I16 ml="ml-[8px]"><rect width="16" height="16" rx="1.500" fill="#2b8a39" /><path d="M4 3V13M12 3V13M4 8H12" stroke="#fff" strokeWidth="2.300" /></I16>
      <I16 ml="ml-[8px]"><rect x="4.500" y="4.500" width="9" height="7" fill="#8ea2b5" stroke="#fff" /><path d="M1.500 1V6M1 6V14H5" stroke="#fff" strokeWidth="1.500" fill="none" /><path d="M8 8L15 15M15 8L8 15" stroke="#d31616" strokeWidth="2.200" /></I16>
      <I16 ml="ml-[8px]"><path d="M0 5H3L7 1V14L3 10H0Z" fill="#f4f4f4" stroke="#888" strokeWidth=".5" /><circle cx="11" cy="11" r="4" fill="#fff" stroke="#dc2020" strokeWidth="1.700" /><path d="M8.500 8.500L13.500 13.500" stroke="#dc2020" strokeWidth="1.500" /></I16>
      <div className={`${UI} flex flex-1 flex-col items-center gap-[2px] pl-[6px] text-white`}>
        <span>下午 3:00</span>
        <span className="tracking-[0.1px]">2018/6/23 星期六</span>
      </div>
      <div className="h-[38px] w-[14px] shrink-0 border border-[#3e5068] bg-[linear-gradient(#b9cadc,#6f93bd_50%,#8fb1d6)]" />
    </div>
  );
}

export default function App() {
  return (
    <div className="flex h-[1080px] w-[1920px] flex-col overflow-hidden bg-[#2f2f2f]">
      <div className="flex h-[28px] items-start">
        <div className="ml-[9px] w-[882px]"><Logo w={39} h={28} /></div>
        <span className={`${MONO} mt-[7px] text-[#c8c8c8]`}>DSView v0.9.8</span>
        <div className="ml-auto mr-[5px] mt-[4px] flex h-[18px] items-center">
          <div className="mr-[6px] mt-[5px] h-px w-[8px] bg-[#c8c8c8]" />
          <div className="h-[18px] w-px bg-[linear-gradient(#2f2f2f,#707070,#2f2f2f)]" />
          <svg width="9" height="9" viewBox="0 0 9 9" className="mx-[5px]"><path d="M3.500.5H8.500V5.500H3.500ZM.5 3H6V8.500H.5Z" fill="none" stroke="#c8c8c8" /></svg>
          <div className="h-[18px] w-px bg-[linear-gradient(#2f2f2f,#707070,#2f2f2f)]" />
          <svg width="9" height="9" viewBox="0 0 9 9" className="ml-[5px]"><path d="M.5.5L8.500 8.500M8.500.5L.5 8.500" stroke="#e8e8e8" strokeWidth="1.700" /></svg>
        </div>
      </div>
      <Toolbar />
      <div className="flex h-[937px]">
        <div className="flex w-[150px] flex-col">
          <div className={`${MONO} ml-[5px] mt-[13px] flex h-[24px] w-[32px] items-center justify-center rounded-[4px] border border-[#1f1f1f] bg-[linear-gradient(#353535,#5e5e5e_50%,#353535)] pr-[2px] text-[#c4c4c4]`}>OSC</div>
          <div className="mt-[126px] flex flex-col gap-[200px]">
            <Channel color={YELLOW} idx="0" />
            <Channel color={RED} idx="1" />
          </div>
        </div>
        <div className="relative w-[1552px]">
          <Plot />
          <div className="absolute right-[41px] top-[85px] flex gap-[10px]">
            <MeasureCard name="CH1" head="bg-[#8b0508ee]" text="text-[#cf5553]" rows={["Freq: 4.73kHz", "Vmax: 8.73V", "Vmin: 7.95V"]} />
            <MeasureCard name="CH0" head="bg-[#be9012ee]" text="text-[#fbd560]" rows={["Freq: 1.28kHz", "Vmax: 5.43V", "Vmin: 4.45V"]} />
          </div>
        </div>
        <div className="w-[3px] bg-[linear-gradient(#2f2f2f,#404040_50%,#2f2f2f)]" />
        <Dock />
      </div>
      <ScrollBars />
      <TaskBar />
    </div>
  );
}
